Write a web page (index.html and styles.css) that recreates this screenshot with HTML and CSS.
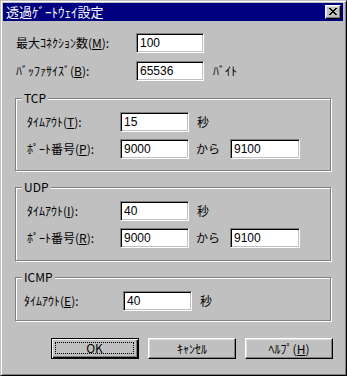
FILE: index.html
```html
<!DOCTYPE html>
<html lang="ja">
<head>
    <meta charset="UTF-8">
    <title>透過ｹﾞｰﾄｳｪｲ設定</title>
    <link rel="stylesheet" href="styles.css">
</head>
<body>

<div class="window">
    <!-- Title Bar -->
    <div class="title-bar">
        <span class="title-text">透過ｹﾞｰﾄｳｪｲ設定</span>
        <button class="close-btn" aria-label="閉じる">
            <svg width="8" height="7" viewBox="0 0 8 7">
                <path d="M0 0h2v1h-2zM6 0h2v1h-2zM1 1h2v1h-2zM5 1h2v1h-2zM2 2h4v1h-4zM3 3h2v1h-2zM2 4h4v1h-4zM1 5h2v1h-2zM5 5h2v1h-2zM0 6h2v1h-2zM6 6h2v1h-2z" fill="#000"/>
            </svg>
        </button>
    </div>

    <div class="content">
        <div class="row">
            <label class="label label-wide" for="max-conn">最大ｺﾈｸｼｮﾝ数(<u>M</u>):</label>
            <input class="field" type="text" id="max-conn" value="100">
        </div>
        <div class="row">
            <label class="label label-wide" for="buf-size">ﾊﾞｯﾌｧｻｲｽﾞ(<u>B</u>):</label>
            <input class="field" type="text" id="buf-size" value="65536">
            <span class="unit unit-byte">ﾊﾞｲﾄ</span>
        </div>

        <!-- TCP -->
        <div class="group group-tcp">
            <span class="group-title">TCP</span>
            <div class="row">
                <label class="label" for="tcp-timeout">ﾀｲﾑｱｳﾄ(<u>T</u>):</label>
                <input class="field field-sm" type="text" id="tcp-timeout" value="15">
                <span class="unit">秒</span>
            </div>
            <div class="row">
                <label class="label" for="tcp-port">ﾎﾟｰﾄ番号(<u>P</u>):</label>
                <input class="field field-sm" type="text" id="tcp-port" value="9000">
                <span class="unit unit-from">から</span>
                <input class="field field-to" type="text" value="9100">
            </div>
        </div>

        <!-- UDP -->
        <div class="group group-udp">
            <span class="group-title">UDP</span>
            <div class="row">
                <label class="label" for="udp-timeout">ﾀｲﾑｱｳﾄ(<u>I</u>):</label>
                <input class="field field-sm" type="text" id="udp-timeout" value="40">
                <span class="unit">秒</span>
            </div>
            <div class="row">
                <label class="label" for="udp-port">ﾎﾟｰﾄ番号(<u>R</u>):</label>
                <input class="field field-sm" type="text" id="udp-port" value="9000">
                <span class="unit unit-from">から</span>
                <input class="field field-to" type="text" value="9100">
            </div>
        </div>

        <!-- ICMP -->
        <div class="group group-icmp">
            <span class="group-title">ICMP</span>
            <div class="row">
                <label class="label" for="icmp-timeout">ﾀｲﾑｱｳﾄ(<u>E</u>):</label>
                <input class="field field-sm" type="text" id="icmp-timeout" value="40">
                <span class="unit">秒</span>
            </div>
        </div>

        <div class="buttons">
            <button class="btn btn-default"><span class="focus">OK</span></button>
            <button class="btn">ｷｬﾝｾﾙ</button>
            <button class="btn">ﾍﾙﾌﾟ(<u>H</u>)</button>
        </div>
    </div>
</div>

</body>
</html>
```

FILE: styles.css
```css
/* Classic dialog colours */
:root {
    --face: #c0c0c0;
    --shadow: #808080;
    --light: #dfdfdf;
    --title: #000080;
}

body {
    margin: 0;
    background-color: var(--face);
    font-family: "Noto Sans CJK JP", sans-serif;
    font-size: 12px;
    color: #000;
}

/* Window frame */
.window {
    width: 347px;
    height: 376px;
    box-sizing: border-box;
    border: 1px solid;
    border-color: var(--face) #000 #000 var(--face);
    box-shadow: inset 1px 1px #fff, inset -1px -1px var(--shadow);
    padding: 2px 3px 3px 2px;
    background-color: var(--face);
}

/* Title bar */
.title-bar {
    height: 18px;
    background-color: var(--title);
    display: flex;
    align-items: center;
    justify-content: space-between;
    padding: 0 2px 0 3px;
}

.title-text {
    color: #fff;
    font-size: 13px;
    line-height: 18px;
}

.close-btn {
    width: 16px;
    height: 14px;
    padding: 0;
    display: flex;
    align-items: center;
    justify-content: center;
    background-color: var(--face);
    border: 1px solid;
    border-color: #fff #000 #000 #fff;
    box-shadow: inset -1px -1px var(--shadow), inset 1px 1px var(--light);
}

.close-btn svg {
    display: block;
    margin-left: -1px;
    margin-top: -1px;
}

/* Content */
.content {
    padding: 12px 10px 0 12px;
}

.row {
    display: flex;
    align-items: center;
    height: 20px;
    line-height: 16px;
}

.row + .row {
    margin-top: 8px;
}

.label {
    width: 93px;
    flex-shrink: 0;
    white-space: nowrap;
}

.label-wide {
    width: 120px;
    margin-left: 1px;
}

/* Sunken edit fields */
.field {
    width: 68px;
    height: 20px;
    box-sizing: border-box;
    margin: 0;
    padding: 0 0 0 3px;
    border: 1px solid;
    border-color: var(--shadow) #fff #fff var(--shadow);
    box-shadow: inset 1px 1px #000, inset -1px -1px var(--face);
    background-color: #fff;
    font-family: "Liberation Sans", sans-serif;
    font-size: 12px;
    color: #000;
    outline: none;
}

.field-sm {
    width: 69px;
}

.field-to {
    width: 70px;
}

.unit {
    margin-left: 8px;
}

.unit-byte {
    margin-left: 9px;
}

.unit-from {
    margin-left: 7px;
    margin-right: 10px;
}

/* Group boxes */
.group {
    position: relative;
    margin-right: 2px;
    border: 1px solid var(--shadow);
    box-shadow: inset 1px 1px #fff, 1px 1px #fff;
    padding: 13px 0 11px 11px;
}

.group .row + .row {
    margin-top: 7px;
}

.group-tcp {
    margin-top: 17px;
}

.group-udp {
    margin-top: 16px;
    padding-bottom: 12px;
}

.group-icmp {
    margin-top: 16px;
    padding: 13px 0 9px 8px;
}

.group-icmp .label {
    width: 99px;
}

.group-title {
    position: absolute;
    top: -8px;
    left: 6px;
    padding: 0 2px;
    line-height: 14px;
    background-color: var(--face);
}

/* Buttons */
.buttons {
    display: flex;
    justify-content: flex-end;
    gap: 9px;
    margin-top: 17px;
}

.btn {
    width: 88px;
    height: 21px;
    box-sizing: border-box;
    padding: 0;
    background-color: var(--face);
    border: 1px solid;
    border-color: #fff #000 #000 #fff;
    box-shadow: inset -1px -1px var(--shadow), inset 1px 1px var(--light);
    font-family: "Noto Sans CJK JP", sans-serif;
    font-size: 12px;
    line-height: 16px;
    color: #000;
}

.btn-default {
    border-color: #000;
    box-shadow: inset 1px 1px #fff, inset -1px -1px #000, inset -2px -2px var(--shadow);
    padding: 3px 4px 4px 3px;
}

.focus {
    display: flex;
    align-items: center;
    justify-content: center;
    height: 100%;
    box-sizing: border-box;
    border: 1px dotted #000;
}
```
